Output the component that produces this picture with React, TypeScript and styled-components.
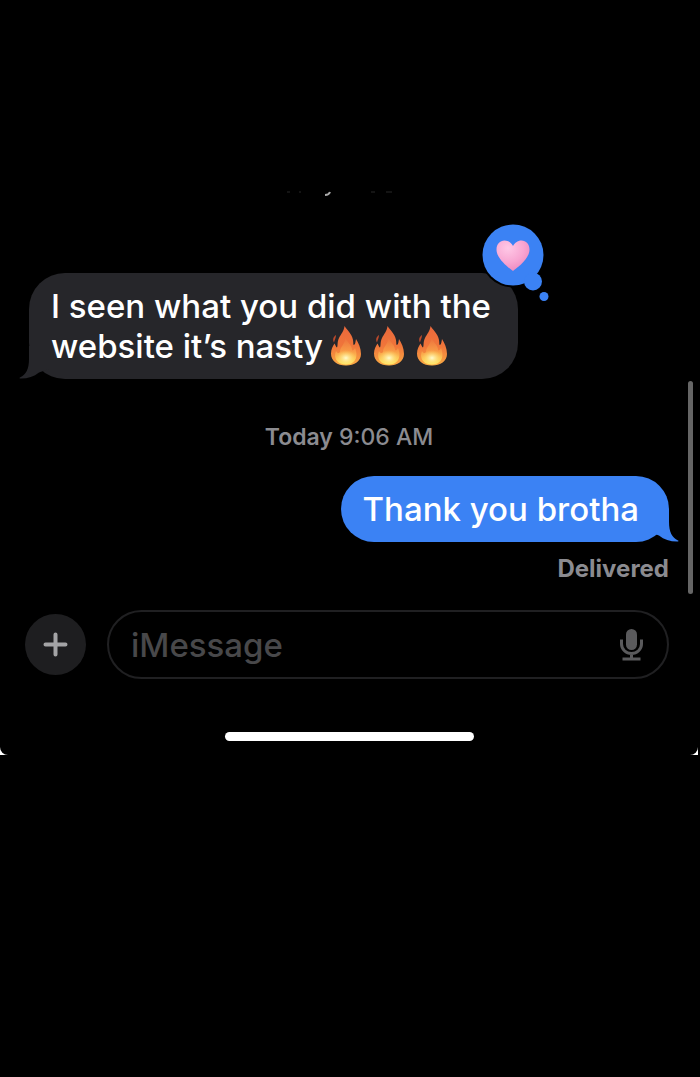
import React from 'react';
import styled, { createGlobalStyle } from 'styled-components';

const GlobalStyle = createGlobalStyle`
  * { box-sizing: border-box; }
  body {
    margin: 0;
    background: #000;
    font-family: Inter, "Liberation Sans", sans-serif;
    -webkit-font-smoothing: antialiased;
  }
`;

const Backdrop = styled.div`
  min-height: 100vh;
  padding-right: 2px;
  background: #000;
`;

const ScreenEdge = styled.div`
  background: #fff;
`;

const Screen = styled.main`
  display: flex;
  flex-direction: column;
  padding: 188px 29px 14px 25px;
  border-radius: 0 0 8px 8px;
  background: #000;
`;

const Thread = styled.section`
  position: relative;
  display: flex;
  flex-direction: column;
  padding-left: 4px;
`;

const ClippedStamp = styled.svg`
  display: block;
  align-self: center;
  width: 132px;
  height: 9px;
  margin-bottom: 76px;
`;

const Bubble = styled.div<{ $sent?: boolean }>`
  position: relative;
  align-self: ${(p) => (p.$sent ? 'flex-end' : 'flex-start')};
  max-width: 489px;
  padding: 13px ${(p) => (p.$sent ? 30 : 22)}px 13px 22px;
  border-radius: ${(p) => (p.$sent ? 34 : 36)}px;
  background: ${(p) => (p.$sent ? '#3b82f4' : '#26262a')};
  color: #fff;
  font-size: 33px;
  font-weight: 500;
  line-height: 40px;
`;

const TailShape = styled.svg<{ $sent?: boolean }>`
  position: absolute;
  bottom: 0;
  ${(p) => (p.$sent ? 'right: -10px; transform: scaleX(-1);' : 'left: -10px;')}
  width: 40px;
  height: 40px;
  fill: ${(p) => (p.$sent ? '#3b82f4' : '#26262a')};
`;

const BubbleText = styled.p`
  position: relative;
  margin: 0;
`;

const EmojiRow = styled.span`
  display: inline-flex;
  gap: 11px;
  height: 40px;
  margin-left: 7px;
  vertical-align: top;
`;

const FlameIcon = styled.svg`
  width: 32px;
  height: 40px;
`;

const ReactionBadge = styled.svg`
  position: absolute;
  top: -52px;
  right: -34px;
  width: 72px;
  height: 84px;
`;

const TimeStamp = styled.time`
  align-self: center;
  margin: 44px 0 25px;
  color: #8b8b90;
  font-size: 23px;
  font-weight: 500;
  line-height: 28px;

  b { font-weight: 600; }
`;

const Receipt = styled.span`
  align-self: flex-end;
  margin-top: 13px;
  color: #8b8b90;
  font-size: 24px;
  font-weight: 700;
  line-height: 28px;
`;

const ScrollThumb = styled.div`
  position: absolute;
  right: -24px;
  bottom: -11px;
  width: 5px;
  height: 213px;
  border-radius: 3px;
  background: #666;
`;

const Composer = styled.form`
  display: flex;
  align-items: center;
  gap: 21px;
  margin-top: 27px;
`;

const AddButton = styled.button`
  display: grid;
  place-items: center;
  flex: none;
  width: 61px;
  height: 61px;
  padding: 0;
  border: 0;
  border-radius: 50%;
  background: #1e1e20;
`;

const Field = styled.div`
  display: flex;
  align-items: center;
  flex: 1;
  min-width: 0;
  height: 69px;
  padding: 0 24px 0 22px;
  border: 2px solid #202022;
  border-radius: 35px;
`;

const MessageInput = styled.input`
  flex: 1;
  min-width: 0;
  padding: 0;
  border: 0;
  outline: 0;
  background: transparent;
  color: #fff;
  font: 500 33px/40px Inter, "Liberation Sans", sans-serif;

  &::placeholder { color: #48484a; opacity: 1; }
`;

const MicButton = styled.button`
  display: grid;
  flex: none;
  padding: 0;
  border: 0;
  background: transparent;
`;

const HomeRow = styled.div`
  display: flex;
  justify-content: center;
  padding: 53px 0 0 4px;
`;

const HomeIndicator = styled.div`
  width: 249px;
  height: 9px;
  border-radius: 5px;
  background: #fff;
`;

function Tail({ sent }: { sent?: boolean }) {
  return (
    <TailShape $sent={sent} viewBox="0 0 40 40" aria-hidden="true">
      <path d="M10 7V20C10 30 7 35.500 1 38.500C0 39 .5 39.500 2 39.500C9 39.500 15 37.500 20 33.500L30 30V7Z" />
    </TailShape>
  );
}

function Flame() {
  return (
    <FlameIcon viewBox="0 0 32 40" aria-hidden="true">
      <path
        d="M14.500 0C17 4 22 8 23 14C23.500 17 23 19 24 19C25.500 18 25.500 15 26 13C28.500 17 31 22 31 28C31 35 24.500 39.500 16 39.500C7 39.500 1 35 1 27.500C1 23 3 20 4.500 17.500C5.500 19 6 21 7 21.500C8 20 7 16 9 12C11 8 14 5 14.500 0Z"
        fill="url(#flameOuter)"
      />
      <path
        d="M15.500 12C17 16 22 19 22 24C23 25 24 24 25 22C28 29 27 38 16 38.500C5 38 4 30 6 25C7 27 9 28 10 26C10 21 15 18 15.500 12Z"
        fill="url(#flameInner)"
      />
      <ellipse cx="16" cy="32" rx="10" ry="8" fill="url(#flameCore)" />
      <path d="M6 9C3 11 2.500 14 4 16.500C4.500 14 6 12 6 9Z" fill="#bd4a2c" />
    </FlameIcon>
  );
}

function Reaction() {
  return (
    <ReactionBadge viewBox="0 0 72 84" role="img" aria-label="Loved">
      <defs>
        <radialGradient id="heartFill" cx="35%" cy="25%" r="85%">
          <stop offset="0" stopColor="#ffc8e6" />
          <stop offset=".55" stopColor="#f8a6d2" />
          <stop offset="1" stopColor="#ea84bb" />
        </radialGradient>
        <linearGradient id="flameOuter" x1="0" y1="0" x2="0" y2="1">
          <stop offset="0" stopColor="#e9683c" />
          <stop offset=".5" stopColor="#f0753a" />
          <stop offset="1" stopColor="#f9a944" />
        </linearGradient>
        <linearGradient id="flameInner" x1="0" y1="0" x2="0" y2="1">
          <stop offset="0" stopColor="#ec713c" />
          <stop offset=".5" stopColor="#f99c47" />
          <stop offset="1" stopColor="#ffe863" />
        </linearGradient>
        <radialGradient id="flameCore">
          <stop offset="0" stopColor="#fffbd0" />
          <stop offset="1" stopColor="#ffe766" stopOpacity="0" />
        </radialGradient>
      </defs>
      <g fill="#000">
        <circle cx="33" cy="34" r="32.500" />
        <circle cx="53" cy="60.500" r="11" />
      </g>
      <g fill="#3b82f4">
        <circle cx="33" cy="34" r="30.500" />
        <circle cx="53" cy="60.500" r="9" />
        <circle cx="64" cy="75.500" r="4.500" />
      </g>
      <path
        d="M33 50C29 47 16.500 38 16.500 28.500C16.500 23 20 19.500 24.500 19.500C28.500 19.500 31.500 22 33 25C34.500 22 37.500 19.500 41.500 19.500C46 19.500 49.500 23 49.500 28.500C49.500 38 37 47 33 50Z"
        fill="url(#heartFill)"
      />
    </ReactionBadge>
  );
}

export default function App() {
  return (
    <Backdrop>
      <GlobalStyle />
      <ScreenEdge>
        <Screen>
          <Thread>
            <ClippedStamp viewBox="0 0 132 9" aria-hidden="true">
              <path d="M42 7Q46 7 47 4" fill="none" stroke="#aaa" strokeWidth="2" />
              <path d="M4 4h3M16 4h2M88 4h4M103 4h6" stroke="#141414" strokeWidth="2" />
            </ClippedStamp>
            <Bubble>
              <Tail />
              <BubbleText>
                I seen what you did with the website it’s nasty
                <EmojiRow role="img" aria-label="Fire, fire, fire">
                  <Flame />
                  <Flame />
                  <Flame />
                </EmojiRow>
              </BubbleText>
              <Reaction />
            </Bubble>
            <TimeStamp>
              <b>Today</b> 9:06 AM
            </TimeStamp>
            <Bubble $sent>
              <Tail sent />
              <BubbleText>Thank you brotha</BubbleText>
            </Bubble>
            <Receipt>Delivered</Receipt>
            <ScrollThumb />
          </Thread>
          <Composer>
            <AddButton type="button" aria-label="Add attachment">
              <svg width="27" height="27" viewBox="0 0 27 27" aria-hidden="true">
                <path d="M13.500 3.500v20M3.500 13.500h20" stroke="#a4a4a6" strokeWidth="4" strokeLinecap="round" />
              </svg>
            </AddButton>
            <Field>
              <MessageInput type="text" aria-label="Message" placeholder="iMessage" />
              <MicButton type="button" aria-label="Dictate">
                <svg width="24" height="34" viewBox="0 0 24 34" aria-hidden="true">
                  <rect x="7" y="1" width="11" height="21" rx="5.500" fill="#5a5a5c" />
                  <path
                    d="M2.500 13v3a10 9.500 0 0 0 20 0v-3M12.500 26v5M5 31h15"
                    fill="none"
                    stroke="#5a5a5c"
                    strokeWidth="3"
                    strokeLinecap="square"
                  />
                </svg>
              </MicButton>
            </Field>
          </Composer>
          <HomeRow>
            <HomeIndicator />
          </HomeRow>
        </Screen>
      </ScreenEdge>
    </Backdrop>
  );
}
